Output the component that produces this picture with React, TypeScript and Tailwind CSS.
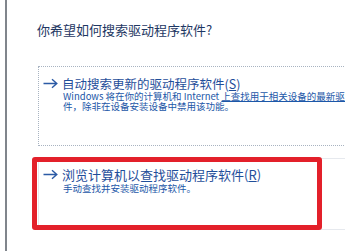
import React from "react";

function Arrow() {
  return (
    <svg width="15" height="11" viewBox="0 0 15 11" fill="none" className="shrink-0">
      <path d="M0.5 5.5H13.8M9 1.3L13.8 5.5L9 9.7" stroke="#2b5aa5" strokeWidth="1.4" />
    </svg>
  );
}

export default function App() {
  return (
    <div className="w-[345px] h-[251px] bg-white overflow-hidden flex font-['Noto_Sans_CJK_SC','Noto_Sans',sans-serif]">
      {/* left window edge */}
      <div className="ml-[5px] w-[2px] shrink-0 bg-[#80858c]" />

      <div className="flex-1 pl-[30px] pt-[21px]">
        <h1 className="text-[13px] leading-[18px] text-[#1e3763] whitespace-nowrap">
          你希望如何搜索驱动程序软件?
        </h1>

        {/* option 1 */}
        <div className="mt-[27px] ml-[1px] w-[330px] h-[80px] border border-dotted border-[#a8b3c1] pl-[4px] pt-[9px]">
          <div className="flex items-center gap-[4px] h-[15px]">
            <Arrow />
            <span className="text-[12.5px] leading-[15px] text-[#1f4e9a] whitespace-nowrap">
              自动搜索更新的驱动程序软件(<span className="underline">S</span>)
            </span>
          </div>
          <div className="ml-[20px] text-[9.5px] leading-[10px] text-[#1c57a8] whitespace-nowrap">
            <p>
              Windows 将在你的计算机和 Internet{" "}
              <span className="underline">上查找用于相关设备的最新驱动程序软</span>
            </p>
            <p>件，除非在设备安装设备中禁用该功能。</p>
          </div>
        </div>

        {/* option 2 */}
        <div className="relative mt-[12px] ml-[1px] w-[330px] h-[72px] border border-[#e6e9ee] pl-[4px] pt-[8px]">
          <div className="flex items-center gap-[4px] h-[15px]">
            <Arrow />
            <span className="text-[13px] leading-[15px] text-[#1f4e9a] whitespace-nowrap">
              浏览计算机以查找驱动程序软件(<span className="underline">R</span>)
            </span>
          </div>
          <p className="ml-[20px] mt-[1px] text-[9.5px] leading-[11px] text-[#1c57a8] whitespace-nowrap">
            手动查找并安装驱动程序软件。
          </p>

          {/* red highlight */}
          <div className="absolute -left-[7px] -top-[2px] w-[290px] h-[73px] border-[5px] border-[#e3202a] rounded-[3px]" />
        </div>
      </div>
    </div>
  );
}
